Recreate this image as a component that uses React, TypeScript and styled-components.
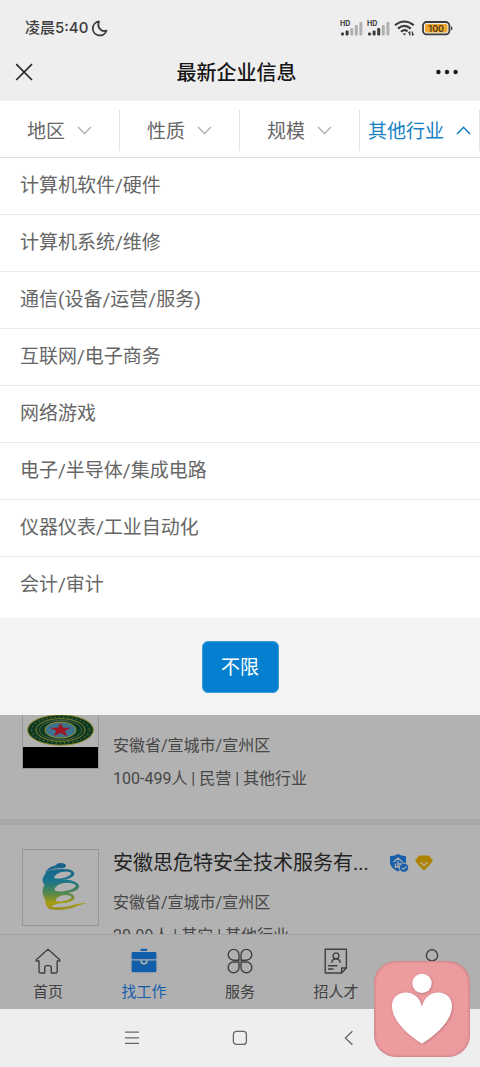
import React from "react";
import styled, { createGlobalStyle } from "styled-components";

const GlobalStyle = createGlobalStyle`
  *, *::before, *::after { box-sizing: border-box; }
  body { margin: 0; background: #eeeeee; }
  button { font: inherit; color: inherit; border: 0; padding: 0; background: none; cursor: pointer; }
  svg { display: block; flex: none; }
`;

const Screen = styled.div`
  position: relative;
  display: flex;
  flex-direction: column;
  min-height: 100vh;
  overflow: hidden;
  font-family: Roboto, "Noto Sans CJK SC", sans-serif;
  color: #666666;
`;

const StatusBar = styled.div`
  display: flex;
  align-items: center;
  justify-content: space-between;
  height: 44px;
  padding: 12px 27px 0 25px;
  font-family: Inter, "Noto Sans CJK SC", sans-serif;
  font-size: 15px;
  line-height: 20px;
  font-weight: 500;
  color: #3c3c3c;
`;

const StatusGroup = styled.div<{ $gap: number }>`
  display: flex;
  align-items: center;
  gap: ${(p) => p.$gap}px;
`;

const TitleBar = styled.header`
  display: grid;
  grid-template-columns: 1fr auto 1fr;
  align-items: center;
  height: 56px;
  padding: 0 21px 0 14px;
`;

const PageTitle = styled.h1`
  margin: 0;
  padding-top: 2px;
  font-size: 20px;
  line-height: 28px;
  font-weight: 500;
  color: #161616;
`;

const IconButton = styled.button<{ $end?: boolean }>`
  display: flex;
  justify-self: ${(p) => (p.$end ? "end" : "start")};
`;

const FilterBar = styled.nav`
  display: grid;
  grid-template-columns: repeat(4, 1fr);
  height: 58px;
  padding: 9px 0 6px;
  background: #ffffff;
  border-top: 1px solid #f2f2f2;
  border-bottom: 1px solid #dedede;
`;

const FilterButton = styled.button<{ $active?: boolean }>`
  display: flex;
  align-items: center;
  justify-content: center;
  gap: 12px;
  border-right: 1px solid #e4e4e4;
  font-size: 19px;
  line-height: 24px;
  white-space: nowrap;
  color: ${(p) => (p.$active ? "#1581c4" : "#666666")};
`;

const FilterLabel = styled.span`
  padding-top: 3px;
`;

const Panel = styled.section`
  position: relative;
  z-index: 2;
  background: #f4f4f4;
`;

const OptionList = styled.ul`
  margin: 0;
  padding: 0 0 4px;
  list-style: none;
  background: #ffffff;
`;

const OptionItem = styled.li`
  border-bottom: 1px solid #ececec;
  &:last-child { border-bottom-color: transparent; }
`;

const OptionButton = styled.button`
  display: block;
  width: 100%;
  height: 56px;
  padding: 0 20px;
  text-align: left;
  font-size: 19px;
  line-height: 28px;
`;

const PanelFooter = styled.div`
  display: flex;
  justify-content: center;
  padding: 23px 0 22px;
`;

const ResetButton = styled.button`
  width: 77px;
  height: 52px;
  padding-bottom: 4px;
  border-radius: 6px;
  border: 1px solid #3d9bd8;
  background: #0580d0;
  color: #ffffff;
  font-size: 19px;
`;

const Backdropped = styled.div`
  position: relative;
  display: flex;
  flex-direction: column;
  flex: 1 0 auto;
`;

const Backdrop = styled.div`
  position: absolute;
  inset: 0;
  z-index: 1;
  background: rgba(0, 0, 0, 0.3);
`;

const Results = styled.main`
  flex: 1 0 218px;
  height: 0;
  overflow: hidden;
  background: #f1f1f1;
`;

const ResultList = styled.div`
  display: flex;
  flex-direction: column;
  gap: 6px;
  margin-top: -47px;
`;

const Card = styled.article`
  display: flex;
  gap: 14px;
  height: 151px;
  padding: 24px 22px 0;
  background: #ffffff;
`;

const Logo = styled.div`
  flex: none;
  width: 77px;
  height: 77px;
  border: 1px solid #d8d8d8;
`;

const CardBody = styled.div`
  flex: 1;
  min-width: 0;
`;

const CardHead = styled.div`
  display: flex;
  align-items: center;
  gap: 6px;
  height: 28px;
  margin-bottom: 5px;
`;

const CompanyName = styled.h2`
  flex: 0 1 270px;
  margin: 0;
  font-size: 20px;
  line-height: 28px;
  font-weight: 400;
  white-space: nowrap;
  color: #333333;
`;

const CardLine = styled.p`
  margin: 0;
  padding-top: 9px;
  font-size: 16px;
  line-height: 24px;
`;

const TabBar = styled.nav`
  display: grid;
  grid-template-columns: repeat(5, 1fr);
  height: 75px;
  background: #fdfdfd;
  border-top: 1px solid #ececec;
`;

const TabButton = styled.button<{ $active?: boolean }>`
  display: flex;
  flex-direction: column;
  align-items: center;
  gap: 6px;
  padding-top: 12px;
  font-size: 15px;
  line-height: 22px;
  color: ${(p) => (p.$active ? "#1c87f5" : "#5c5c5c")};
`;

const SystemNav = styled.div`
  display: flex;
  align-items: center;
  justify-content: center;
  gap: 92px;
  height: 58px;
  background: #eeeeee;
`;

const FloatingButton = styled.button`
  position: absolute;
  right: 10px;
  bottom: 10px;
  z-index: 3;
  width: 96px;
  height: 96px;
  border-radius: 22px;
  background: #ec9b9f;
  box-shadow: inset 0 0 3px #a8696c;
`;

const Moon = () => (
  <svg width="17" height="17" viewBox="0 0 17 17" fill="none" stroke="#3c3c3c" strokeWidth="1.8" strokeLinejoin="round">
    <path d="M8 1.5A7 7 0 1 0 15.5 10.5C11 12.5 5.5 8 8 1.5Z" />
  </svg>
);

const Signal = ({ level }: { level: number }) => (
  <svg width="23" height="16" viewBox="0 0 23 16">
    <text x="0" y="6" fontSize="7" fontWeight="700" fill="#3c3c3c" fontFamily="Inter">HD</text>
    {[0, 1, 2, 3, 4].map((i) => (
      <rect
        key={i}
        x={1 + i * 4.6}
        y={[12.5, 10.5, 8, 5, 2][i]}
        width="3"
        height={[3, 5, 7.5, 10.5, 13.5][i]}
        rx="1"
        fill={i < level ? "#3c3c3c" : "#b0b0b0"}
      />
    ))}
  </svg>
);

const Wifi = () => (
  <svg width="24" height="16" viewBox="0 0 24 16" fill="none" stroke="#3c3c3c" strokeWidth="2.1">
    <path d="M1 5.2Q10.3-2.2 19.8 5.2M4 8.6Q10.3 3 16.8 8.6M7 11.8Q10.3 8.8 13.6 11.4" />
    <path d="M8.5 13.4L10.4 15.4L12.3 13.4Z" fill="#3c3c3c" stroke="none" />
    <path d="M15.8 11.4V15.6M15.8 11.6L14.4 13.2M18.4 15.6V11.4M18.4 15.4L19.8 13.8" strokeWidth="1.2" />
  </svg>
);

const Battery = () => (
  <svg width="31" height="15" viewBox="0 0 31 15">
    <rect x="1" y="1" width="26.4" height="12.4" rx="3.6" fill="#eeeeee" stroke="#3c3c3c" strokeWidth="1.8" />
    <rect x="3" y="3" width="22.4" height="8.4" rx="1.6" fill="#f0a72f" />
    <path d="M29 5.2Q30.4 5.2 30.4 7.2T29 9.2Z" fill="#3c3c3c" />
    <text x="14.2" y="10.6" textAnchor="middle" fontSize="9" fontWeight="600" fill="#4a3a1c" fontFamily="Inter">100</text>
  </svg>
);

const Chevron = ({ up }: { up?: boolean }) => (
  <svg width="15" height="9" viewBox="0 0 15 9" fill="none" stroke={up ? "#1581c4" : "#a9b0b2"} strokeWidth={up ? 1.6 : 1.3}>
    <path d={up ? "M1 8L7.5 1.3L14 8" : "M1 1L7.5 7.5L14 1"} />
  </svg>
);

const EmblemLogo = () => (
  <svg width="75" height="75" viewBox="1 1 75 75">
    <rect x="1" y="55" width="75" height="21" fill="#000000" />
    <ellipse cx="38.5" cy="38" rx="33" ry="15.2" fill="#14542f" stroke="#d3c63c" strokeWidth="1" />
    <ellipse cx="38.5" cy="38" rx="29" ry="13" fill="none" stroke="#9aa04a" strokeWidth="1.2" strokeDasharray="1.2 3" />
    <ellipse cx="38.5" cy="38" rx="24.5" ry="11.4" fill="none" stroke="#c9c04a" strokeWidth="0.9" />
    <ellipse cx="38.5" cy="38" rx="21" ry="9.8" fill="none" stroke="#8fa082" strokeWidth="0.7" />
    <ellipse cx="38.5" cy="38" rx="15.5" ry="8" fill="#58a5cc" stroke="#d9cf3e" strokeWidth="1" />
    <path d="M38.5 31L41.2 35.8H49L42.8 39L45.4 44.2L38.5 41L31.6 44.2L34.2 39L28 35.8H35.8Z" fill="#e31f35" />
  </svg>
);

const SpiralLogo = () => (
  <svg width="75" height="75" viewBox="3 3 225 225" fill="none">
    <defs>
      <linearGradient id="spiral" x1="0" y1="42" x2="0" y2="182" gradientUnits="userSpaceOnUse">
        <stop offset="0" stopColor="#2688c8" />
        <stop offset="0.38" stopColor="#25a8c8" />
        <stop offset="0.66" stopColor="#7dc46a" />
        <stop offset="0.86" stopColor="#f3e01c" />
        <stop offset="1" stopColor="#d9c82c" />
      </linearGradient>
    </defs>
    <g fill="url(#spiral)" fillRule="evenodd">
      <path d="M102 49Q105 42 117 42Q131 43 132 50Q130 58 117 58Q100 56 86 62Q76 65 70 74Q74 54 102 49Z" />
      <path d="M66 80Q74 62 104 61Q151 56 157 72Q157 90 114 93Q82 95 69 110Q56 94 66 80ZM96 88Q108 90 124 87Q146 81 148 73Q142 64 118 69Q98 75 96 88Z" />
      <path d="M65 112Q76 94 118 91Q165 92 172 112Q168 132 119 133Q84 134 71 156Q56 130 65 112ZM97 124Q108 129 126 127Q158 121 162 110Q151 98 121 103Q98 110 97 124Z" />
      <path d="M71 148Q86 131 126 129Q156 132 158 146Q154 160 119 163Q98 165 88 173Q112 178 143 171Q164 163 195 162Q171 168 150 177Q110 187 82 180Q66 168 71 148ZM101 156Q110 159 122 157Q146 152 149 144Q142 135 122 139Q102 144 101 156Z" />
    </g>
  </svg>
);

const VerifiedBadge = () => (
  <svg width="20" height="20" viewBox="0 0 20 20" fill="none">
    <path d="M9 1Q12 3 17 3.2V10Q16 15.5 9 18.5Q2 15.5 1 10V3.2Q6 3 9 1Z" fill="#2488ef" />
    <path d="M4.5 9L9 5.2L13.5 9M9 8V14M5.5 14H12.5M6.5 10.5V14M9 11H12" stroke="#f5faff" strokeWidth="1.3" />
    <circle cx="15" cy="14.7" r="4.7" fill="#2488ef" stroke="#ffffff" strokeWidth="1" />
    <path d="M12.8 14.7L14.5 16.3L17.4 13.3" stroke="#ffffff" strokeWidth="1.1" />
  </svg>
);

const VipBadge = () => (
  <svg width="18" height="16" viewBox="0 0 18 16" fill="none">
    <path d="M4 1H14L17.3 5.4Q17.2 7 9.7 14.6Q9 15.2 8.3 14.6Q1 7.2 0.7 5.4Z" fill="#f8bb05" stroke="#f8bb05" strokeLinejoin="round" />
    <path d="M5.4 7.2L9 10.4L12.6 7.2" stroke="#fff4d0" strokeWidth="1.5" />
  </svg>
);

const tabIcon = { width: 28, height: 28, viewBox: "0 0 28 28", fill: "none", stroke: "currentColor", strokeWidth: 1.4, strokeLinejoin: "round" as const };

const HomeIcon = () => (
  <svg {...tabIcon}>
    <path d="M14 2.2L2.2 12.8V14H5V24.5Q5 26 6.5 26H10.8V20.6Q10.8 18.6 12.6 18.6H15.4Q17.2 18.6 17.2 20.6V26H21.8Q23.2 26 23.2 24.5V14H25.8V12.8Z" />
  </svg>
);

const BriefcaseIcon = () => (
  <svg {...tabIcon}>
    <path d="M10.5 1.8H17.2V4H10.5Z" fill="currentColor" stroke="none" />
    <path d="M3 5H25Q26.4 5 26.4 6.4V12.3H1.6V6.4Q1.6 5 3 5ZM1.6 13.6H10.2Q10.2 17.6 14 17.6T17.8 13.6H26.4V23.7Q26.4 25.2 25 25.2H3Q1.6 25.2 1.6 23.7ZM11.8 13.6H16.2Q16.2 16 14 16T11.8 13.6Z" fill="currentColor" stroke="none" />
  </svg>
);

const CloverIcon = () => (
  <svg {...tabIcon}>
    <path d="M13 13.2H7.6A5.4 5.4 0 1 1 13 7.8ZM15 13.2V7.8A5.4 5.4 0 1 1 20.4 13.2ZM13 15V20.4A5.4 5.4 0 1 1 7.6 15ZM15 15H20.4A5.4 5.4 0 1 1 15 20.4Z" />
  </svg>
);

const ResumeIcon = () => (
  <svg {...tabIcon}>
    <path d="M3.2 2.2H24.4V21L19.6 26H3.2ZM24.4 21H19.6V26" />
    <circle cx="14" cy="8.8" r="2.9" />
    <path d="M9.8 15.8Q10.2 11.8 14 11.8T18.2 15.8M6 18.8H15.4M6 22H11.6" />
  </svg>
);

const PersonIcon = () => (
  <svg {...tabIcon}>
    <circle cx="14" cy="8.4" r="5.6" />
    <path d="M3 26Q4 16 14 16T25 26Z" />
  </svg>
);

const filters = ["地区", "性质", "规模", "其他行业"];

const industries = [
  "计算机软件/硬件",
  "计算机系统/维修",
  "通信(设备/运营/服务)",
  "互联网/电子商务",
  "网络游戏",
  "电子/半导体/集成电路",
  "仪器仪表/工业自动化",
  "会计/审计",
];

const companies = [
  { name: "", area: "安徽省/宣城市/宣州区", meta: "100-499人 | 民营 | 其他行业", logo: <EmblemLogo />, vip: false },
  { name: "安徽思危特安全技术服务有...", area: "安徽省/宣城市/宣州区", meta: "20-99人 | 其它 | 其他行业", logo: <SpiralLogo />, vip: true },
];

const tabs = [
  { label: "首页", icon: <HomeIcon /> },
  { label: "找工作", icon: <BriefcaseIcon />, active: true },
  { label: "服务", icon: <CloverIcon /> },
  { label: "招人才", icon: <ResumeIcon /> },
];

export default function App() {
  return (
    <Screen>
      <GlobalStyle />
      <StatusBar>
        <StatusGroup $gap={3}>
          <span>凌晨5:40</span>
          <Moon />
        </StatusGroup>
        <StatusGroup $gap={4}>
          <Signal level={2} />
          <Signal level={3} />
          <Wifi />
          <Battery />
        </StatusGroup>
      </StatusBar>

      <TitleBar>
        <IconButton aria-label="关闭">
          <svg width="20" height="20" viewBox="0 0 20 20" fill="none" stroke="#2a2a2a" strokeWidth="1.7">
            <path d="M2.2 2.2L18 18M18 2.2L2.2 18" />
          </svg>
        </IconButton>
        <PageTitle>最新企业信息</PageTitle>
        <IconButton $end aria-label="更多">
          <svg width="24" height="6" viewBox="0 0 24 6" fill="#1c1c1c">
            <circle cx="3.4" cy="3" r="2.2" />
            <circle cx="12" cy="3" r="2.2" />
            <circle cx="20.6" cy="3" r="2.2" />
          </svg>
        </IconButton>
      </TitleBar>

      <FilterBar>
        {filters.map((f, i) => (
          <FilterButton key={f} $active={i === 3} aria-expanded={i === 3}>
            <FilterLabel>{f}</FilterLabel>
            <Chevron up={i === 3} />
          </FilterButton>
        ))}
      </FilterBar>

      <Panel>
        <OptionList>
          {industries.map((name) => (
            <OptionItem key={name}>
              <OptionButton>{name}</OptionButton>
            </OptionItem>
          ))}
        </OptionList>
        <PanelFooter>
          <ResetButton>不限</ResetButton>
        </PanelFooter>
      </Panel>

      <Backdropped>
        <Results>
          <ResultList>
            {companies.map((c, i) => (
              <Card key={i}>
                <Logo>{c.logo}</Logo>
                <CardBody>
                  <CardHead>
                    <CompanyName>{c.name}</CompanyName>
                    <VerifiedBadge />
                    {c.vip && <VipBadge />}
                  </CardHead>
                  <CardLine>{c.area}</CardLine>
                  <CardLine>{c.meta}</CardLine>
                </CardBody>
              </Card>
            ))}
          </ResultList>
        </Results>
        <TabBar>
          {tabs.map((t) => (
            <TabButton key={t.label} $active={t.active}>
              {t.icon}
              {t.label}
            </TabButton>
          ))}
          <TabButton aria-label="我的">
            <PersonIcon />
          </TabButton>
        </TabBar>
        <Backdrop />
      </Backdropped>

      <SystemNav>
        <IconButton aria-label="菜单">
          <svg width="16" height="16" viewBox="0 0 16 16" stroke="#666666" strokeWidth="1.3">
            <path d="M1 2.2H15M1 7.8H15M1 13.4H15" />
          </svg>
        </IconButton>
        <IconButton aria-label="主屏幕">
          <svg width="16" height="16" viewBox="0 0 16 16" fill="none" stroke="#666666" strokeWidth="1.3">
            <rect x="1.4" y="1.4" width="13" height="13" rx="3" />
          </svg>
        </IconButton>
        <IconButton aria-label="返回">
          <svg width="16" height="16" viewBox="0 0 16 16" fill="none" stroke="#666666" strokeWidth="1.3">
            <path d="M12.4 1.2L5.4 8L12.4 14.8" />
          </svg>
        </IconButton>
      </SystemNav>

      <FloatingButton aria-label="关爱">
        <svg width="96" height="96" viewBox="0 0 96 96" fill="#ffffff">
          <defs>
            <filter id="soft" x="-20%" y="-20%" width="140%" height="140%">
              <feDropShadow dx="0.6" dy="0.6" stdDeviation="1" floodColor="#8d4b50" floodOpacity="0.6" />
            </filter>
          </defs>
          <g filter="url(#soft)">
            <path d="M48 82.4C38 77 18 61 18 45C18 28 44 26 48 46C52 26 78 28 78 45C78 61 58 77 48 82.4Z" />
            <circle cx="48" cy="22.4" r="9.6" />
          </g>
        </svg>
      </FloatingButton>
    </Screen>
  );
}
